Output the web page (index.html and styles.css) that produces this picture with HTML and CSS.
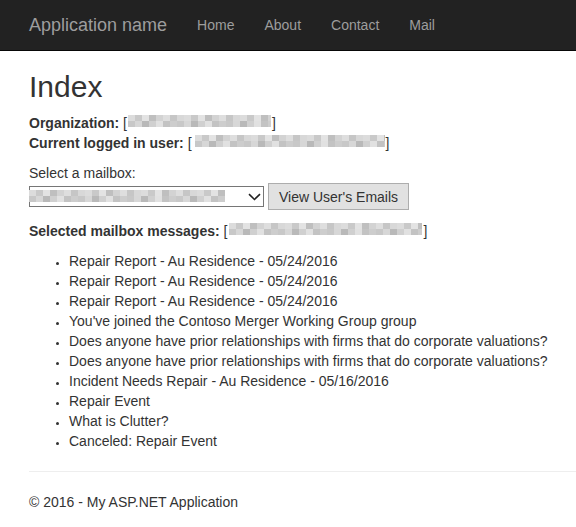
FILE: index.html
```html
<!DOCTYPE html>
<html lang="en">
<head>
<meta charset="utf-8">
<title>Index - My ASP.NET Application</title>
<link rel="stylesheet" href="styles.css">
</head>
<body>
<nav class="navbar">
  <a class="brand" href="#">Application name</a>
  <ul class="nav">
    <li><a href="#">Home</a></li>
    <li><a href="#">About</a></li>
    <li><a href="#">Contact</a></li>
    <li><a href="#">Mail</a></li>
  </ul>
</nav>
<main class="body-content">
  <h2 class="title">Index</h2>
  <div class="info">
    <div><b>Organization:</b> [<span class="blur blur-org"></span>]</div>
    <div><b>Current logged in user:</b> [<span class="blur blur-user"></span>]</div>
  </div>
  <div class="label">Select a mailbox:</div>
  <div class="picker">
    <div class="select" role="combobox" aria-expanded="false">
      <span class="blur blur-select"></span>
      <svg class="chevron" width="13" height="8" viewBox="0 0 13 8"><path d="M1 1.2 L6.5 6.5 L12 1.2" fill="none" stroke="#222" stroke-width="1.6"/></svg>
    </div>
    <button class="btn" type="button">View User's Emails</button>
  </div>
  <div class="selected"><b>Selected mailbox messages:</b> [<span class="blur blur-sel"></span>]</div>
  <ul class="messages">
    <li>Repair Report - Au Residence - 05/24/2016</li>
    <li>Repair Report - Au Residence - 05/24/2016</li>
    <li>Repair Report - Au Residence - 05/24/2016</li>
    <li>You've joined the Contoso Merger Working Group group</li>
    <li>Does anyone have prior relationships with firms that do corporate valuations?</li>
    <li>Does anyone have prior relationships with firms that do corporate valuations?</li>
    <li>Incident Needs Repair - Au Residence - 05/16/2016</li>
    <li>Repair Event</li>
    <li>What is Clutter?</li>
    <li>Canceled: Repair Event</li>
  </ul>
  <hr class="rule">
  <footer class="footer">
    <p>&copy; 2016 - My ASP.NET Application</p>
  </footer>
</main>
</body>
</html>
```
FILE: styles.css
```css
html, body {
  margin: 0;
  padding: 0;
}
body {
  font-family: "Liberation Sans", Arial, sans-serif;
  font-size: 14px;
  line-height: 20px;
  color: #333;
  background: #fff;
  overflow: hidden;
}
.navbar {
  display: flex;
  align-items: center;
  height: 50px;
  background: #222;
  border-bottom: 1px solid #080808;
  padding-left: 14px;
}
.brand {
  display: block;
  padding: 15px;
  font-size: 18px;
  line-height: 20px;
  color: #9d9d9d;
  text-decoration: none;
}
.nav {
  display: flex;
  list-style: none;
  margin: 0;
  padding: 0;
}
.nav a {
  display: block;
  padding: 15px;
  line-height: 20px;
  color: #9d9d9d;
  text-decoration: none;
}
.body-content {
  padding-left: 29px;
}
.title {
  margin: 19px 0 10px;
  font-size: 30px;
  line-height: 33px;
  font-weight: normal;
  color: #333;
}
.info {
  margin-bottom: 10px;
}
.blur {
  display: inline-block;
  height: 12px;
  vertical-align: 1px;
  background:
    repeating-linear-gradient(90deg, #dcdcdc 0 7px, #c9c9c9 7px 14px, #e3e3e3 14px 21px, #bfbfbf 21px 28px, #d3d3d3 28px 35px, #dedede 35px 42px, #c6c6c6 42px 49px, #d8d8d8 49px 56px) top / 100% 50% no-repeat,
    repeating-linear-gradient(90deg, #c8c8c8 0 7px, #d7d7d7 7px 14px, #b9b9b9 14px 21px, #d0d0d0 21px 28px, #e1e1e1 28px 35px, #c3c3c3 35px 42px, #cdcdcd 42px 49px) bottom / 100% 50% no-repeat;
}
.blur-org { width: 143px; margin: 0 1px 0 1px; }
.blur-user { width: 190px; margin: 0 1px 0 3px; }
.blur-sel { width: 193px; margin: 0 1px 0 2px; }
.picker {
  display: flex;
  align-items: center;
  gap: 4px;
}
.select {
  position: relative;
  box-sizing: border-box;
  width: 235px;
  height: 21px;
  border: 1px solid #767676;
  background: #fff;
}
.blur-select {
  position: absolute;
  left: -1px;
  top: 3px;
  width: 196px;
}
.chevron {
  position: absolute;
  right: 2px;
  top: 6px;
}
.btn {
  box-sizing: border-box;
  height: 27px;
  width: 141px;
  padding: 0;
  font-family: "Liberation Sans", Arial, sans-serif;
  font-size: 14px;
  color: #333;
  background: #e1e1e1;
  border: 1px solid #adadad;
  border-radius: 0;
}
.selected {
  margin-top: 11px;
}
.messages {
  margin: 10px 0 10px;
  padding-left: 40px;
}
.messages li::marker {
  font-size: 11px;
}
.rule {
  margin: 20px 0;
  border: 0;
  border-top: 1px solid #eee;
}
.footer p {
  margin: 0 0 10px;
}
```
